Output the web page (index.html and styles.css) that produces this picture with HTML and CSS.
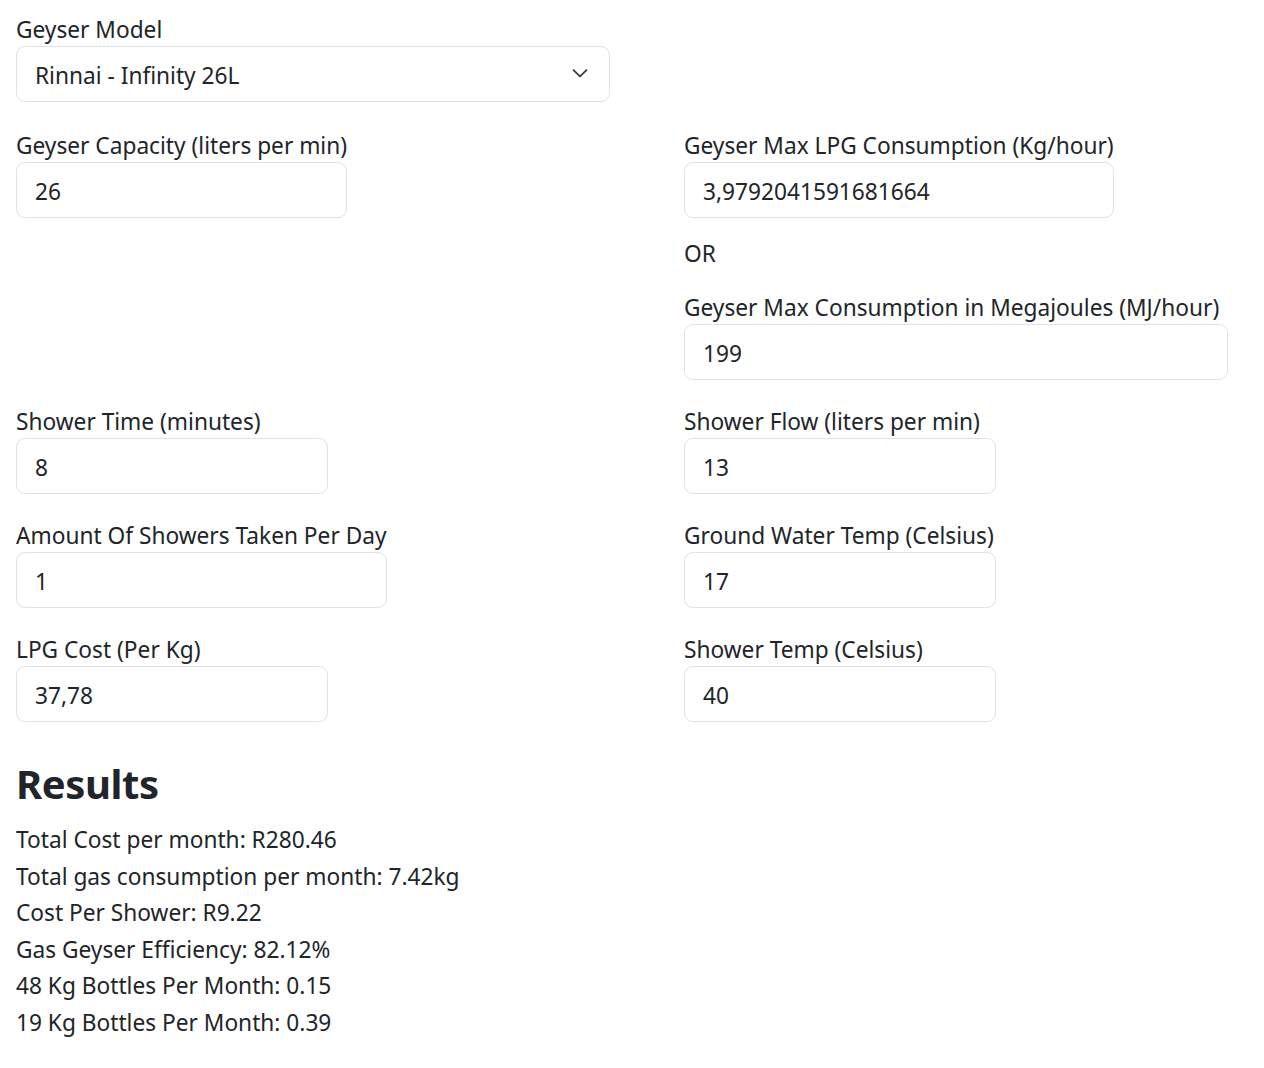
FILE: index.html
```html
<!DOCTYPE html>
<html lang="en">
<head>
<meta charset="utf-8">
<title>Gas Geyser Calculator</title>
<link rel="stylesheet" href="styles.css">
</head>
<body>
<main class="page">
  <div class="field field-select">
    <label class="label">Geyser Model</label>
    <div class="select">
      <span class="select-value">Rinnai - Infinity 26L</span>
      <svg class="chev" width="16" height="9" viewBox="0 0 16 9"><path d="M1.5 1.2 8 7.4l6.5-6.2" fill="none" stroke="#343a40" stroke-width="1.8" stroke-linecap="round" stroke-linejoin="round"/></svg>
    </div>
  </div>

  <div class="grid">
    <div class="col">
      <div class="field">
        <label class="label">Geyser Capacity (liters per min)</label>
        <div class="input">26</div>
      </div>
    </div>
    <div class="col">
      <div class="field">
        <label class="label">Geyser Max LPG Consumption (Kg/hour)</label>
        <div class="input">3,9792041591681664</div>
      </div>
      <p class="or">OR</p>
      <div class="field field-wide">
        <label class="label">Geyser Max Consumption in Megajoules (MJ/hour)</label>
        <div class="input">199</div>
      </div>
    </div>

    <div class="col">
      <div class="field">
        <label class="label">Shower Time (minutes)</label>
        <div class="input">8</div>
      </div>
    </div>
    <div class="col">
      <div class="field">
        <label class="label">Shower Flow (liters per min)</label>
        <div class="input">13</div>
      </div>
    </div>

    <div class="col">
      <div class="field">
        <label class="label">Amount Of Showers Taken Per Day</label>
        <div class="input">1</div>
      </div>
    </div>
    <div class="col">
      <div class="field">
        <label class="label">Ground Water Temp (Celsius)</label>
        <div class="input">17</div>
      </div>
    </div>

    <div class="col">
      <div class="field">
        <label class="label">LPG Cost (Per Kg)</label>
        <div class="input">37,78</div>
      </div>
    </div>
    <div class="col">
      <div class="field">
        <label class="label">Shower Temp (Celsius)</label>
        <div class="input">40</div>
      </div>
    </div>
  </div>

  <section class="results">
    <h2 class="results-title">Results</h2>
    <p class="line">Total Cost per month: R280.46</p>
    <p class="line">Total gas consumption per month: 7.42kg</p>
    <p class="line">Cost Per Shower: R9.22</p>
    <p class="line">Gas Geyser Efficiency: 82.12%</p>
    <p class="line">48 Kg Bottles Per Month: 0.15</p>
    <p class="line">19 Kg Bottles Per Month: 0.39</p>
  </section>
</main>
</body>
</html>
```
FILE: styles.css
```css
html, body {
  margin: 0;
  padding: 0;
  background: #fff;
}
body {
  font-family: "Noto Sans", "Open Sans", sans-serif;
  font-size: 22.7px;
  color: #212529;
}
.page {
  padding: 11px 16px 0 16px;
}
.label {
  display: block;
  box-sizing: border-box;
  height: 35px;
  padding-top: 1px;
  line-height: 35px;
  white-space: nowrap;
}
.field {
  display: flex;
  flex-direction: column;
  width: max-content;
  min-width: 312px;
}
.field-wide {
  min-width: 544px;
}
.field-select {
  width: 594px;
  margin-bottom: 25px;
}
.input, .select {
  box-sizing: border-box;
  height: 56px;
  border: 1px solid #dee2e6;
  border-radius: 9px;
  padding: 3px 18px 0;
  display: flex;
  align-items: center;
  line-height: 36px;
  background: #fff;
}
.select {
  justify-content: space-between;
  padding-right: 21px;
}
.select-value {
  padding-top: 1px;
}
.chev {
  display: block;
  margin-top: -4px;
}
.grid {
  display: grid;
  grid-template-columns: 668px 1fr;
  row-gap: 23px;
}
.or {
  margin: 18px 0 17px;
  line-height: 36px;
}
.results {
  margin-top: 36px;
}
.results-title {
  margin: 0 0 12px;
  font-size: 40px;
  font-weight: 700;
  line-height: 52px;
  letter-spacing: -0.4px;
}
.line {
  margin: 0;
  line-height: 36.6px;
}
```
